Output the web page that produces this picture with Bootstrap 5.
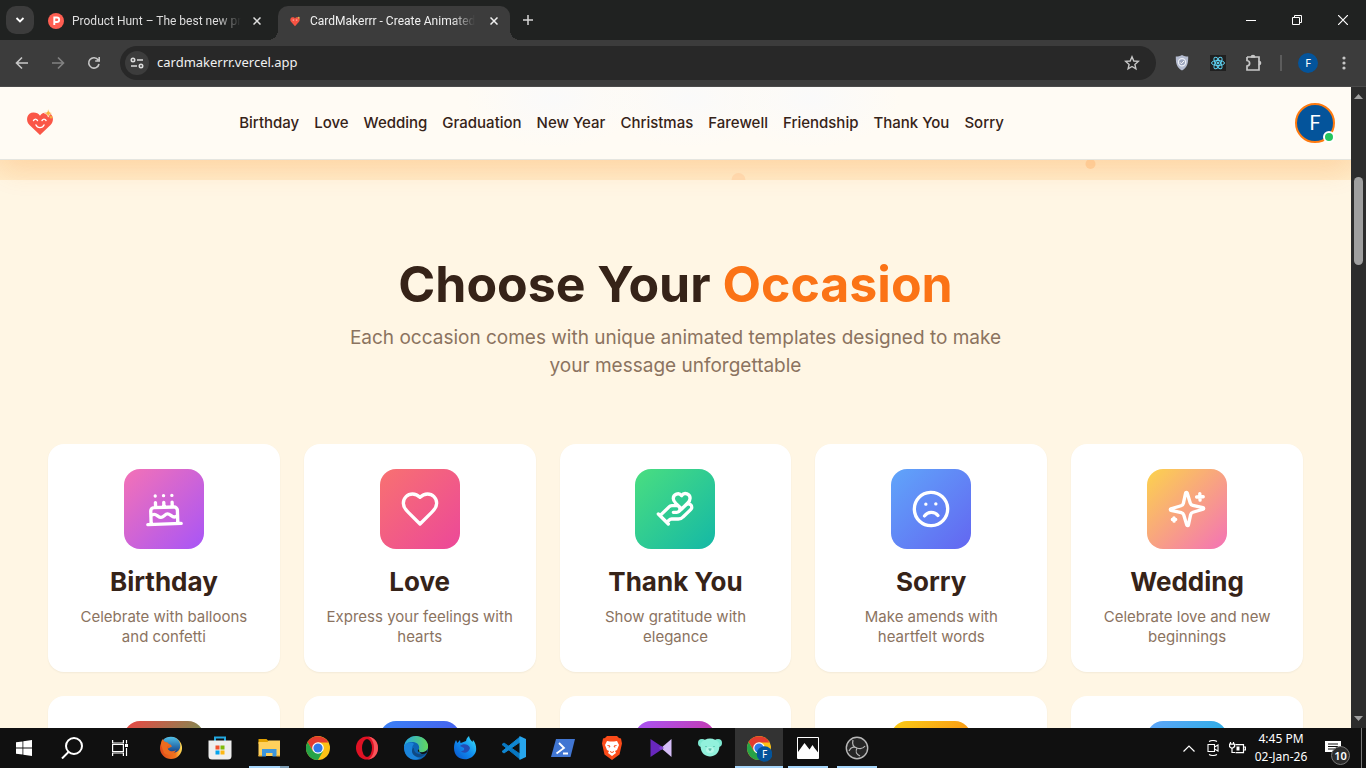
<!DOCTYPE html>
<html lang="en">
<head>
<meta charset="utf-8">
<meta name="viewport" content="width=device-width, initial-scale=1">
<title>CardMakerrr - Create Animated Cards</title>
<link href="https://cdn.jsdelivr.net/npm/bootstrap@5.3.0/dist/css/bootstrap.min.css" rel="stylesheet">
<style>
  :root { --ui: "Noto Sans", "Open Sans", sans-serif; --site: Inter, "Open Sans", sans-serif; }
  body { font-family: var(--ui); background: #fff6e4; }
  svg { display: block; flex: none; }
  button { font-family: inherit; }
  .plain-btn { background: none; border: 0; padding: 0; color: inherit; display: flex; align-items: center; justify-content: center; flex: none; }

  /* browser frame */
  .tab-strip { height: 40px; background: #202221; color: #dedede; padding-left: 6px; font-size: 12px; }
  .tab-search { width: 28px; height: 28px; border-radius: 10px; background: #3c3c3c; }
  .browser-tab { width: 232px; height: 34px; padding: 0 6px 4px 10px; position: relative; }
  .browser-tab.current { background: #3c3c3c; border-radius: 10px 10px 0 0; color: #f0f0f0; padding-right: 8px; }
  .browser-tab.current::before, .browser-tab.current::after { content: ""; position: absolute; bottom: 0; width: 10px; height: 10px; }
  .browser-tab.current::before { left: -10px; background: radial-gradient(circle at 0 0, transparent 10px, #3c3c3c 10px); }
  .browser-tab.current::after { right: -10px; background: radial-gradient(circle at 100% 0, transparent 10px, #3c3c3c 10px); }
  .tab-title { height: 20px; line-height: 20px; font-family: Roboto, sans-serif; font-size: 12px; white-space: nowrap; text-align: left; -webkit-mask-image: linear-gradient(90deg, #000 86%, transparent); mask-image: linear-gradient(90deg, #000 86%, transparent); }
  .tab-close { width: 16px; height: 16px; }
  .win-btn { width: 46px; height: 40px; color: #fff; }
  .tool-bar { height: 47px; background: #3c3c3c; color: #c7c7c7; border-bottom: 1px solid #4a4a4a; padding: 0 4px; }
  .tool-btn { width: 36px; height: 34px; }
  .address { height: 34px; border-radius: 17px; background: #282828; padding: 0 16px 0 5px; }
  .site-info { width: 24px; height: 24px; border-radius: 50%; background: #3c3c3c; color: #dcdcdc; }
  .address input { background: none; border: 0; outline: 0; color: #f1f1f1; font-size: 13px; min-width: 0; }
  .divider { width: 2px; height: 16px; background: #5c5c5c; margin: 0 8px; }
  .profile { width: 20px; height: 20px; border-radius: 50%; background: #04549b; color: #fff; font-size: 11px; }
  .scroll-track { width: 15px; background: #2c2c2c; padding: 7px 0; color: #9f9f9f; }
  .scroll-thumb { width: 9px; height: 88px; border-radius: 5px; background: #9f9f9f; margin-top: 78px; }

  /* site */
  .site { font-family: var(--site); color: #362318; background: #fff6e4; }
  .site-header { height: 73px; padding: 0 16px 0 24px; border-bottom: 1px solid #e5e5e0; position: relative; z-index: 2;
    background: radial-gradient(ellipse 90px 50px at 41% 15%, #fafafa, transparent), radial-gradient(ellipse 90px 50px at 51% 15%, #fafafa, transparent), radial-gradient(ellipse 90px 50px at 60% 15%, #fafafa, transparent), #fffbf4;
    box-shadow: 0 20px 25px -5px rgba(249, 115, 22, .1); }
  .site-nav { gap: 15px; padding-right: 108px; }
  .site-nav a { font-size: 15px; line-height: 20px; font-weight: 500; color: #362318; text-decoration: none; white-space: nowrap; }
  .account { width: 40px; height: 40px; border-radius: 50%; border: 2px solid #ff7a0f; background: #04549b; color: #fff; font-size: 20px; font-family: Roboto, sans-serif; position: relative; }
  .online { position: absolute; right: -2px; bottom: -2px; width: 12px; height: 12px; border-radius: 50%; background: #22c55e; border: 2px solid #fff; }
  .hero-end { height: 20px; background: linear-gradient(#ffe4bc, #ffebc8); overflow: hidden; }
  .hero-end svg { width: 100%; height: 20px; }
  .occasions { padding: 80px 48px 0; }
  .occasions h1 { font-size: 50px; line-height: 48px; font-weight: 700; margin-bottom: 16px; }
  .occasions h1 span { color: #fb7316; }
  .intro { font-size: 19px; line-height: 28px; max-width: 672px; margin: 0 auto 64px; color: #8b735f; }
  .occasion { display: block; height: 228px; padding: 25px 20px; background: #fff; border-radius: 16px; text-align: center; text-decoration: none; color: inherit; box-shadow: 0 1px 2px rgba(0, 0, 0, .05); }
  .occasion h2 { font-size: 26px; line-height: 34px; font-weight: 700; margin: 16px 0 8px; }
  .occasion p { font-size: 15px; line-height: 20px; color: #8b735f; margin: 0; }
  .tile { width: 80px; height: 80px; border-radius: 16px; margin: 0 auto; display: flex; align-items: center; justify-content: center; }
  .tile svg { width: 40px; height: 40px; fill: none; stroke: #fff; stroke-width: 2; stroke-linecap: round; stroke-linejoin: round; }
  .g-birthday { background: linear-gradient(135deg, #f472b6, #a855f7); }
  .g-love { background: linear-gradient(135deg, #f87171, #ec4899); }
  .g-thanks { background: linear-gradient(135deg, #4ade80, #14b8a6); }
  .g-sorry { background: linear-gradient(135deg, #60a5fa, #6366f1); }
  .g-wedding { background: linear-gradient(135deg, #fcd34d, #f472b6); }
  .g-christmas { background: linear-gradient(135deg, #ef4444, #22c55e); }
  .g-graduation { background: linear-gradient(135deg, #3b82f6, #4f46e5); }
  .g-newyear { background: linear-gradient(135deg, #a855f7, #db2777); }
  .g-friendship { background: linear-gradient(135deg, #facc15, #f97316); }
  .g-farewell { background: linear-gradient(135deg, #60a5fa, #06b6d4); }

  /* taskbar */
  .task-bar { height: 40px; background: #101010; color: #fff; }
  .task-btn { width: 48px; height: 40px; position: relative; }
  .task-apps { gap: 1px; margin-left: 3px; }
  .task-btn.running::after { content: ""; position: absolute; left: 4px; right: 4px; bottom: 0; height: 2px; background: #a6d5fa; }
  .task-btn.stacked::after { background: linear-gradient(90deg, #a6d5fa 31px, #7d9db5 31px); }
  .task-btn.front { background: #333; }
  .task-btn.front::after { left: 0; right: 0; }
  .tray-btn { width: 24px; height: 40px; }
  .clock { width: 64px; font-size: 12px; line-height: 18px; text-align: center; white-space: nowrap; }
  .notices { width: 48px; height: 40px; position: relative; justify-content: flex-start; padding-left: 12px; }
  .notice-count { position: absolute; left: 18px; top: 18px; width: 19px; height: 19px; border-radius: 50%; border: 1px solid #777; background: #2b2b2b; font-size: 11px; line-height: 17px; font-weight: 600; }
  .desk-edge { width: 5px; border-left: 1px solid #777; }
</style>
</head>
<body class="vh-100 d-flex flex-column overflow-hidden">

<div class="tab-strip d-flex align-items-center flex-shrink-0">
  <button class="plain-btn tab-search" aria-label="Search tabs"><svg width="10" height="10" viewBox="0 0 10 10" fill="none" stroke="#fff" stroke-width="1.8"><path d="M1.5 3 5 6.5 8.5 3"/></svg></button>
  <div class="browser-tab align-self-end d-flex align-items-center ms-1 me-2 gap-2">
    <svg width="16" height="16" viewBox="1 1 16 16"><circle cx="9" cy="9" r="8" fill="#ff5f52"/><path d="M7.3 13V5.5h2.6a2.2 2.2 0 0 1 0 4.5H7.3" fill="none" stroke="#fff" stroke-width="1.9"/></svg>
    <span class="tab-title">Product Hunt – The best new pr</span>
    <button class="plain-btn tab-close ms-auto" aria-label="Close tab"><svg width="8" height="8" viewBox="0 0 8 8" stroke="currentColor" stroke-width="1.5"><path d="m.5.5 7 7m0-7-7 7"/></svg></button>
  </div>
  <div class="browser-tab current align-self-end d-flex align-items-center gap-2">
    <svg width="14" height="14" viewBox="0 0 15 14"><path d="M7.500 12.500 3 7.500C1.500 5 3.500 2.500 5.500 3c1 0 1.500.5 2 1.200C8 3.500 8.500 3 9.500 3c2.500-.5 4 2 2.500 4.500z" fill="#f65343"/><path d="M5 6h1.500M8.500 6H10" stroke="#ffd0c8"/><circle cx="11.500" cy="3.500" r="1" fill="#ddb04e"/></svg>
    <span class="tab-title">CardMakerrr - Create Animated</span>
    <button class="plain-btn tab-close ms-auto" aria-label="Close tab"><svg width="8" height="8" viewBox="0 0 8 8" stroke="currentColor" stroke-width="1.5"><path d="m.5.5 7 7m0-7-7 7"/></svg></button>
  </div>
  <button class="plain-btn tab-search bg-transparent mx-1" aria-label="New tab"><svg width="12" height="12" viewBox="0 0 12 12" stroke="#d5d5d5" stroke-width="1.500"><path d="M6 1v10M1 6h10"/></svg></button>
  <div class="d-flex ms-auto">
    <button class="plain-btn win-btn" aria-label="Minimize"><svg width="10" height="10" stroke="#fff"><path d="M0 5.500h10"/></svg></button>
    <button class="plain-btn win-btn" aria-label="Restore"><svg width="10" height="10" fill="none" stroke="#fff"><path d="M.5 2.500h7v7h-7zM2.500 2.500v-2h7v7h-2"/></svg></button>
    <button class="plain-btn win-btn" aria-label="Close"><svg width="10" height="10" stroke="#fff" stroke-width="1.200"><path d="m0 0 10 10M10 0 0 10"/></svg></button>
  </div>
</div>

<div class="tool-bar d-flex align-items-center flex-shrink-0">
  <button class="plain-btn tool-btn" aria-label="Back"><svg width="14" height="14" viewBox="0 0 14 14" fill="none" stroke="currentColor" stroke-width="1.600"><path d="M13 7H2M7 1.500 1.500 7 7 12.500"/></svg></button>
  <button class="plain-btn tool-btn opacity-50" aria-label="Forward"><svg width="14" height="14" viewBox="0 0 14 14" fill="none" stroke="currentColor" stroke-width="1.600"><path d="M1 7h11M7 1.500 12.500 7 7 12.500"/></svg></button>
  <button class="plain-btn tool-btn" aria-label="Reload"><svg width="14" height="14" viewBox="0 0 14 14" fill="none" stroke="currentColor" stroke-width="1.600"><path d="M12 8A5.200 5.200 0 1 1 11.200 4M12.200 1v4h-4"/></svg></button>
  <div class="address d-flex align-items-center flex-grow-1 ms-2">
    <button class="plain-btn site-info" aria-label="Site information"><svg width="14" height="12" viewBox="0 0 14 12" fill="none" stroke="currentColor" stroke-width="1.600"><circle cx="3" cy="3" r="1.700"/><path d="M7 3h6M1 9h6"/><circle cx="11" cy="9" r="1.700"/></svg></button>
    <input class="flex-grow-1 ms-2 p-0" type="text" aria-label="Address" value="cardmakerrr.vercel.app">
    <button class="plain-btn ms-2" aria-label="Bookmark this page"><svg width="16" height="16" viewBox="0 0 16 16" fill="none" stroke="currentColor" stroke-width="1.400"><path d="m8 1.800 1.800 4.200 4.500.4-3.400 3 1 4.400L8 11.500l-3.900 2.300 1-4.400-3.400-3L6.200 6z"/></svg></button>
  </div>
  <button class="plain-btn tool-btn ms-2" aria-label="Shield extension"><svg width="14" height="16" viewBox="0 0 14 16"><path d="M7 0c2 1.300 4 1.600 6.200 1.600 0 6-.4 10.800-6.200 14C1.200 12.400.8 7.600.8 1.600 3 1.600 5 1.300 7 0z" fill="#b5bcd0"/><circle cx="7" cy="7.300" r="3.600" fill="#9ba4bd" stroke="#eef1f8" stroke-width="1.200"/><path d="m5 7.300 1.500 1.500L9 6" fill="none" stroke="#fff"/></svg></button>
  <button class="plain-btn tool-btn" aria-label="React extension"><svg width="16" height="16" viewBox="0 0 16 16" fill="none" stroke="#5ed3f3"><path d="M0 0h16v16H0z" fill="#202020" stroke="none"/><ellipse cx="8" cy="8" rx="6.500" ry="2.500"/><ellipse cx="8" cy="8" rx="6.500" ry="2.500" transform="rotate(60 8 8)"/><ellipse cx="8" cy="8" rx="6.500" ry="2.500" transform="rotate(120 8 8)"/><circle cx="8" cy="8" r="1" fill="#5ed3f3"/></svg></button>
  <button class="plain-btn tool-btn" aria-label="Extensions"><svg width="18" height="18" viewBox="0 0 18 18" fill="none" stroke="currentColor" stroke-width="1.700"><path d="M2 3h12v4.500M14 10.500V16H2v-4c3.500-.5 3.500-5 0-5.500V3"/><path d="M6.500 3a1.500 1.500 0 0 1 3 0zM14 7.500a1.500 1.500 0 0 1 0 3z" fill="currentColor"/></svg></button>
  <span class="divider"></span>
  <button class="plain-btn profile mx-2" aria-label="Profile">F</button>
  <button class="plain-btn tool-btn" aria-label="Menu"><svg width="4" height="14" fill="currentColor"><circle cx="2" cy="2" r="1.600"/><circle cx="2" cy="7" r="1.600"/><circle cx="2" cy="12" r="1.600"/></svg></button>
</div>

<div class="d-flex flex-grow-1 overflow-hidden">
  <div class="site flex-grow-1 overflow-hidden">
    <header class="site-header d-flex align-items-center justify-content-between">
      <a href="#" aria-label="CardMakerrr home"><svg width="32" height="32" viewBox="0 0 32 32"><path d="M16 28 5.500 18C1 13.500 3 5.500 9.500 5.500c3 0 5 1 6.500 3.200 1.500-2.200 3.500-3.200 6.500-3.200C29 5.500 31 13.500 26.500 18z" fill="#fa5647"/><path d="M9.500 13.500q2-2.800 4 0M18 13.500q2-2.800 4 0M12 18c1.500 3.500 6.500 3.500 8 0" fill="none" stroke="#fff" stroke-width="1.400" stroke-linecap="round"/><path d="M24.300 2.300 25.500 5l2.700 1.200-2.700 1.200-1.200 2.700-1.200-2.700-2.700-1.200L23.100 5z" fill="#f9b53c" stroke="#fffbf4" stroke-width=".6"/><path d="m27 8 .7 1.400 1.400.7-1.400.7-.7 1.400-.7-1.400-1.400-.7 1.400-.7z" fill="#f9b53c"/></svg></a>
      <nav class="site-nav d-flex" aria-label="Occasions">
        <a href="#">Birthday</a><a href="#">Love</a><a href="#">Wedding</a><a href="#">Graduation</a><a href="#">New Year</a><a href="#">Christmas</a><a href="#">Farewell</a><a href="#">Friendship</a><a href="#">Thank You</a><a href="#">Sorry</a>
      </nav>
      <button class="plain-btn account" aria-label="Account">F<span class="online"></span></button>
    </header>
    <div class="hero-end"><svg viewBox="0 0 1351 20" preserveAspectRatio="xMidYMin slice"><circle cx="1090.500" cy="4" r="5" fill="#ffd3a0"/><circle cx="738.500" cy="20" r="7" fill="#ffdcb3"/></svg></div>
    <main class="occasions">
      <h1 class="text-center">Choose Your <span>Occasion</span></h1>
      <p class="intro text-center">Each occasion comes with unique animated templates designed to make your message unforgettable</p>
      <div class="row row-cols-5 g-4">
        <div class="col"><a class="occasion" href="#"><span class="tile g-birthday"><svg viewBox="0 0 24 24"><g transform="rotate(-2 12 12)"><path d="M20 21v-8a2 2 0 0 0-2-2H6a2 2 0 0 0-2 2v8M4 16s.5-1 2-1 2.500 2 4 2 2.500-2 4-2 2.500 2 4 2 2-1 2-1M2 21h20M7 8v3M12 8v3M17 8v3M7 4h.01M12 4h.01M17 4h.01"/></g></svg></span><h2>Birthday</h2><p>Celebrate with balloons and confetti</p></a></div>
        <div class="col"><a class="occasion" href="#"><span class="tile g-love"><svg viewBox="0 0 24 24"><path d="M19 14c1.490-1.460 3-3.210 3-5.500A5.500 5.500 0 0 0 16.500 3c-1.760 0-3 .5-4.500 2-1.500-1.500-2.740-2-4.500-2A5.500 5.500 0 0 0 2 8.500c0 2.300 1.500 4.050 3 5.500l7 7Z"/></svg></span><h2>Love</h2><p>Express your feelings with hearts</p></a></div>
        <div class="col"><a class="occasion" href="#"><span class="tile g-thanks"><svg viewBox="0 0 24 24"><path d="M11 14h2a2 2 0 1 0 0-4h-3c-.6 0-1.100.2-1.400.6L3 16M7 20l1.600-1.400c.3-.4.8-.6 1.400-.6h4c1.100 0 2.100-.4 2.800-1.200l4.600-4.400a2 2 0 0 0-2.750-2.910l-4.200 3.900M2 15l6 6M19.500 8.500c.7-.7 1.500-1.600 1.500-2.700A2.730 2.730 0 0 0 16 4a2.780 2.780 0 0 0-5 1.800c0 1.200.8 2 1.500 2.800L16 12Z"/></svg></span><h2>Thank You</h2><p>Show gratitude with elegance</p></a></div>
        <div class="col"><a class="occasion" href="#"><span class="tile g-sorry"><svg viewBox="0 0 24 24"><g transform="rotate(-2 12 12)"><circle cx="12" cy="12" r="10"/><path d="M16 16s-1.500-2-4-2-4 2-4 2M9 9h.01M15 9h.01"/></g></svg></span><h2>Sorry</h2><p>Make amends with heartfelt words</p></a></div>
        <div class="col"><a class="occasion" href="#"><span class="tile g-wedding"><svg viewBox="0 0 24 24"><g transform="rotate(-2 12 12)"><path d="M9.937 15.500A2 2 0 0 0 8.500 14.063l-6.135-1.582a.5.5 0 0 1 0-.962L8.500 9.936A2 2 0 0 0 9.937 8.500l1.582-6.135a.5.5 0 0 1 .963 0L14.063 8.500A2 2 0 0 0 15.500 9.937l6.135 1.581a.5.5 0 0 1 0 .964L15.500 14.063a2 2 0 0 0-1.437 1.437l-1.582 6.135a.5.5 0 0 1-.963 0zM20 3v4M22 5h-4M4 17v2M5 18H3"/></g></svg></span><h2>Wedding</h2><p>Celebrate love and new beginnings</p></a></div>
        <div class="col"><a class="occasion" href="#" aria-label="Christmas"><span class="tile g-christmas"></span></a></div>
        <div class="col"><a class="occasion" href="#" aria-label="Graduation"><span class="tile g-graduation"></span></a></div>
        <div class="col"><a class="occasion" href="#" aria-label="New Year"><span class="tile g-newyear"></span></a></div>
        <div class="col"><a class="occasion" href="#" aria-label="Friendship"><span class="tile g-friendship"></span></a></div>
        <div class="col"><a class="occasion" href="#" aria-label="Farewell"><span class="tile g-farewell"></span></a></div>
      </div>
    </main>
  </div>
  <div class="scroll-track d-flex flex-column align-items-center flex-shrink-0">
    <svg width="9" height="5" fill="currentColor"><path d="M4.500 0 9 5H0z"/></svg>
    <div class="scroll-thumb"></div>
    <svg class="mt-auto" width="9" height="5" fill="currentColor"><path d="M4.500 5 9 0H0z"/></svg>
  </div>
</div>

<footer class="task-bar d-flex flex-shrink-0">
  <button class="plain-btn task-btn" aria-label="Start"><svg width="16" height="16" fill="#fff"><path d="M0 2.300 6.500 1.400v6.200H0zM7.300 1.300 16 0v7.600H7.300zM0 8.400h6.500v6.200L0 13.700zM7.300 8.400H16V16l-8.700-1.300z"/></svg></button>
  <button class="plain-btn task-btn" aria-label="Search"><svg width="22" height="22" viewBox="0 0 22 22" fill="none" stroke="#fff" stroke-width="2"><circle cx="13" cy="9" r="8"/><path d="m7.500 15-6.500 6.500"/></svg></button>
  <button class="plain-btn task-btn" aria-label="Task view"><svg width="16" height="16" fill="none" stroke="#fff" stroke-width="1.200"><path d="M.6 0v3h10.800V0M.6 16v-3h10.800v3M.6 4.500h10.800v7H.6zM14.500 0v3.500M14.500 8v8"/><path d="M13 4h3v3h-3z" fill="#fff" stroke="none"/></svg></button>
  <div class="task-apps d-flex">
    <button class="plain-btn task-btn" aria-label="Firefox"><svg width="24" height="24" viewBox="0 0 24 24"><defs><linearGradient id="fx" x2="1"><stop stop-color="#e0481b"/><stop offset=".7" stop-color="#f0761c"/><stop offset="1" stop-color="#ffe35a"/></linearGradient><linearGradient id="fxb" y2="1" x2="0"><stop stop-color="#4fc0e8"/><stop offset="1" stop-color="#123f88"/></linearGradient></defs><circle cx="12" cy="12" r="11" fill="url(#fx)"/><path d="M4 4C9-1 18 0 20.500 6c2 5 0 10-5 10.500-4 .5-7-2-6.500-4l4-2-1.500-2-4-.5C6.500 6.500 5 6 4 4z" fill="url(#fxb)"/><path d="M2 9c0-3 .5-5 2-6 0 2 1.500 3 4.500 3.500L11 9l-3 1.500c0 4 5 6.500 9 3.500-2 5-9 6-12 3z" fill="#ec6b20"/></svg></button>
    <button class="plain-btn task-btn" aria-label="Store"><svg width="24" height="24" viewBox="0 0 24 24"><path d="M7 6V1.500h10V6" fill="none" stroke="#22a8e0" stroke-width="2"/><path d="M.5 4.500h23V20a3.500 3.500 0 0 1-3.500 3.500H4A3.500 3.500 0 0 1 .5 20z" fill="#eee"/><path d="M7.500 9.500h4v4h-4z" fill="#f2502d"/><path d="M12.500 9.500h4v4h-4z" fill="#80bb0a"/><path d="M7.500 14.500h4v4h-4z" fill="#03a4ee"/><path d="M12.500 14.500h4v4h-4z" fill="#fdb813"/></svg></button>
    <button class="plain-btn task-btn running stacked" aria-label="File Explorer"><svg width="22" height="20" viewBox="0 0 22 20"><path d="M.5 1h8l2 2H22v3H.5z" fill="#e2a100"/><path d="M.5 4h9l1-1.500H22V18H.5z" fill="#ffd05c"/><path d="M4 18.500v-7.500h14.500v7.500h-4V15H8v3.500z" fill="#3d96dc"/><path d="M.5 17h3.500v1.500H.5zM18.500 17H22v1.500h-3.500z" fill="#e9b23b"/></svg></button>
    <button class="plain-btn task-btn" aria-label="Chrome"><svg width="24" height="24" viewBox="0 0 24 24"><circle cx="12" cy="12" r="12" fill="#fbc116"/><path d="M1.600 6A12 12 0 0 1 22.400 6.500H12L6.800 15z" fill="#e33b2e"/><path d="M1.600 6A12 12 0 0 0 12 24l5.200-9L12 17 6.800 15z" fill="#27a347"/><circle cx="12" cy="12" r="5.800" fill="#fff"/><circle cx="12" cy="12" r="4.600" fill="#2f78e8"/></svg></button>
    <button class="plain-btn task-btn" aria-label="Opera"><svg width="24" height="24" viewBox="0 0 24 24"><ellipse cx="12" cy="12" rx="11" ry="11.500" fill="#e01224"/><path d="M13 .5C19 1 23 6 23 12s-4 11-10 11.500c4-2 6-6 6-11.500S17 2.500 13 .5z" fill="#f9545a"/><ellipse cx="12" cy="12" rx="5" ry="9" fill="#101010"/></svg></button>
    <button class="plain-btn task-btn" aria-label="Edge"><svg width="24" height="24" viewBox="0 0 24 24"><defs><linearGradient id="ed" x2="1"><stop stop-color="#25a7e3"/><stop offset="1" stop-color="#63d65c"/></linearGradient></defs><circle cx="12" cy="12" r="12" fill="#0d64b5"/><path d="M0 12C0 4 7-1 14 .2 21 1 25 7 24 12c-1 4-6 5-9 4-2-.8-1-2 0-3 1-5-3-7-7-7-4 0-7 2-8 6z" fill="url(#ed)"/><path d="M0 12c0-5 7-7 10-4-4 4-2 13 6 14-7 4-15 0-16-10z" fill="#1b84da"/><path d="M10 12c-.5 5 5 8 12 5-4 7-14 4-14-2 0-2 1-3 2-3z" fill="#104a83"/><path d="M24 12c-1 4-6 5-9 4-2-.8-1-2 0-3 0 5 3 6 7.500 4z" fill="#101010"/></svg></button>
    <button class="plain-btn task-btn" aria-label="Firefox Developer Edition"><svg width="24" height="24" viewBox="0 0 24 24"><defs><linearGradient id="fd" x1="1" x2="0" y2="1"><stop stop-color="#3fe8f8"/><stop offset=".5" stop-color="#108df0"/><stop offset="1" stop-color="#0950c9"/></linearGradient></defs><path d="M1 12c0-3 .5-5 2-8l1.500 3L7 4l.5 3C10 6 11 6 13 5c.5-2 1-3.500 3-5 .5 3 2 4 3.500 6L20 4c3 3 3.500 8 3 11-3 11.500-22 11.500-22-3z" fill="url(#fd)"/><path d="M7 10c3-3 9-2 10 2-1 5-7 6-9 3 3 0 3.500-1 3-3z" fill="#244db5"/></svg></button>
    <button class="plain-btn task-btn" aria-label="Visual Studio Code"><svg width="24" height="24" viewBox="0 0 24 24"><path d="M0 8.500 2 7l16 11v5z" fill="#0878c2" stroke="#0878c2"/><path d="M0 15.500 2 17 18 6V1z" fill="#1087d2" stroke="#1087d2"/><path d="m17.500 0 6.500 3v18l-6.500 3z" fill="#27a5ec"/></svg></button>
    <button class="plain-btn task-btn" aria-label="PowerShell"><svg width="24" height="20" viewBox="0 0 24 20"><path d="M5 1h19l-4.500 18H0z" fill="#4176d2"/><path d="m8 5 5 5-7.500 5.500M12 15.500h5" fill="none" stroke="#fff" stroke-width="1.800"/></svg></button>
    <button class="plain-btn task-btn" aria-label="Brave"><svg width="22" height="24" viewBox="0 0 22 24"><path d="M6 0h10l2 2 2 .5 1 5-2.500 11L11 24l-7.500-5.500L1 7.500l1-5L4 2z" fill="#fb4b19"/><path d="m6 5 3 .5h4L16 5l2 4-2 5-2 1 1 2-4 3-4-3 1-2-2-1-2-5z" fill="#fff"/><path d="m6.500 9.500 2.500.5-.8 1.500M15.500 9.500 13 10l.8 1.500M9 15.500l2 1 2-1" fill="none" stroke="#fb4b19"/></svg></button>
    <button class="plain-btn task-btn" aria-label="Video editor"><svg width="22" height="18"><path d="M.5 0 14 9 .5 18z" fill="#6827bd"/><path d="M21.500 0v18L11 9z" fill="#d5bdf7"/><path d="M11 7l3 2-3 2-2-2z" fill="#8043cf"/></svg></button>
    <button class="plain-btn task-btn" aria-label="Bear app"><svg width="24" height="20" viewBox="0 0 24 20"><circle cx="4" cy="5" r="4" fill="#7de8d1"/><circle cx="20" cy="5" r="4" fill="#7de8d1"/><path d="M3 5c4-6 14-6 18 0 4 18-22 18-18 0z" fill="#92f1dc"/><ellipse cx="12" cy="12" rx="4" ry="3" fill="#b5f7e8"/><path d="M8 8v1M16 8v1M10.500 11h3M12 11v2" stroke="#3aa995"/></svg></button>
    <button class="plain-btn task-btn running front" aria-label="Chrome, profile F"><svg width="26" height="28" viewBox="0 0 26 28"><g transform="translate(0 2)"><circle cx="13" cy="12" r="12" fill="#fbc116"/><path d="M2.600 6A12 12 0 0 1 23.400 6.500H13L7.800 15z" fill="#e33b2e"/><path d="M2.600 6A12 12 0 0 0 13 24l5.200-9-5.200 2-5.200-2z" fill="#27a347"/><circle cx="13" cy="12" r="5.800" fill="#fff"/><circle cx="13" cy="12" r="4.600" fill="#2f78e8"/><circle cx="18.500" cy="18" r="7.800" fill="#04549b"/><text x="18.500" y="22" font-size="10" text-anchor="middle" fill="#fff">F</text></g></svg></button>
    <button class="plain-btn task-btn running" aria-label="Photos"><svg width="22" height="22"><path d="M.5.500h21v21H.5z" fill="#101010" stroke="#fff"/><path d="M1 15 7.500 6l5 6.500L15.500 8l2 3 4 5v5H1z" fill="#fff"/></svg></button>
    <button class="plain-btn task-btn running" aria-label="OBS Studio"><svg width="24" height="24" viewBox="0 0 24 24" fill="none" stroke="#b8b8b8"><circle cx="12" cy="12" r="10.700" fill="#262626" stroke-width="1.400"/><path d="M8 4c-1 4 0 7 4 8 3 1 6 1 8-2M12 12c-2 4-1 6 3 8M12 12c-3-1.500-6-1-8 3" stroke-width="1.200"/></svg></button>
  </div>
  <div class="d-flex align-items-center ms-auto">
    <button class="plain-btn tray-btn" aria-label="Show hidden icons"><svg width="12" height="7" fill="none" stroke="#fff" stroke-width="1.200"><path d="m.5 6.500 5.500-5.500 5.500 5.500"/></svg></button>
    <button class="plain-btn tray-btn" aria-label="Meet now"><svg width="14" height="16" fill="none" stroke="#fff" stroke-width="1.100"><path d="M2 4.500h6.500v7H2zM8.500 7l3.500-2v6L8.500 9M3 1.500Q7-.5 11 1.500M3 14.500q4 2 8 0"/></svg></button>
    <button class="plain-btn tray-btn" aria-label="Battery"><svg width="17" height="12" fill="none" stroke="#fff" stroke-width="1.200"><path d="M6.500 2.600h8v8h-8M15 5h1.400v3H15M1.500 0v2M4.500 0v2M.6 2.200h5v2.400L3 6.500.6 4.600zM3 6.500v4h3"/><path d="M7.500 4.500h3v4h-3z" fill="#fff" stroke="none"/></svg></button>
    <div class="clock">4:45 PM<br>02-Jan-26</div>
    <button class="plain-btn notices" aria-label="Notifications, 10 new"><svg width="16" height="16"><path d="M0 1h16v11h-4v3l-3-3H0z" fill="#fff"/><path d="M3 4h10M3 6.500h10M3 9h7" stroke="#101010"/></svg><span class="notice-count">10</span></button>
    <div class="desk-edge align-self-stretch"></div>
  </div>
</footer>
<script src="https://cdn.jsdelivr.net/npm/bootstrap@5.3.0/dist/js/bootstrap.bundle.min.js"></script>
</body>
</html>
